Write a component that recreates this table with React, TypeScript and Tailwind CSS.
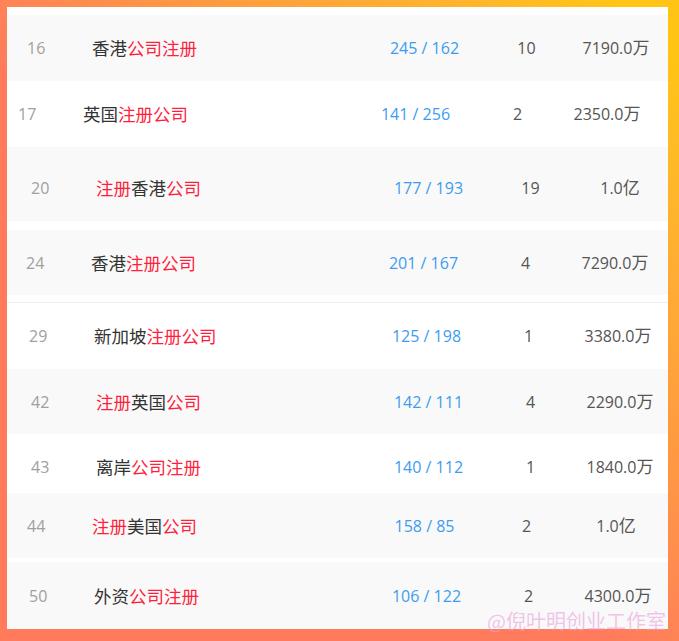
type Part = [string, boolean];

type Row = {
  id: string;
  name: Part[];
  ratio: string;
  count: string;
  amount: string;
  unit: string;
  rowClass: string;
};

const GRAY = "bg-[#f9f9f9]";

const rows: Row[] = [
  {
    id: "16",
    name: [["香港", false], ["公司注册", true]],
    ratio: "245 / 162",
    count: "10",
    amount: "7190.0",
    unit: "万",
    rowClass: `${GRAY} h-[66px] pl-[9px]`,
  },
  {
    id: "17",
    name: [["英国", false], ["注册公司", true]],
    ratio: "141 / 256",
    count: "2",
    amount: "2350.0",
    unit: "万",
    rowClass: "bg-white h-[66px] pl-0",
  },
  {
    id: "20",
    name: [["注册", true], ["香港", false], ["公司", true]],
    ratio: "177 / 193",
    count: "19",
    amount: "1.0",
    unit: "亿",
    rowClass: `${GRAY} h-[74px] pl-[13px] pt-[8px]`,
  },
  {
    id: "24",
    name: [["香港", false], ["注册公司", true]],
    ratio: "201 / 167",
    count: "4",
    amount: "7290.0",
    unit: "万",
    rowClass: `${GRAY} h-[65px] pl-[8px]`,
  },
  {
    id: "29",
    name: [["新加坡", false], ["注册公司", true]],
    ratio: "125 / 198",
    count: "1",
    amount: "3380.0",
    unit: "万",
    rowClass: "bg-white h-[66px] pl-[11px]",
  },
  {
    id: "42",
    name: [["注册", true], ["英国", false], ["公司", true]],
    ratio: "142 / 111",
    count: "4",
    amount: "2290.0",
    unit: "万",
    rowClass: `${GRAY} h-[65px] pl-[13px]`,
  },
  {
    id: "43",
    name: [["离岸", false], ["公司注册", true]],
    ratio: "140 / 112",
    count: "1",
    amount: "1840.0",
    unit: "万",
    rowClass: "bg-white h-[59px] pl-[13px] pt-[7px]",
  },
  {
    id: "44",
    name: [["注册", true], ["美国", false], ["公司", true]],
    ratio: "158 / 85",
    count: "2",
    amount: "1.0",
    unit: "亿",
    rowClass: `${GRAY} h-[65px] pl-[9px]`,
  },
  {
    id: "50",
    name: [["外资", false], ["公司注册", true]],
    ratio: "106 / 122",
    count: "2",
    amount: "4300.0",
    unit: "万",
    rowClass: `${GRAY} h-[67px] pl-[11px]`,
  },
];

// gaps between pasted rows
const gapAfter: Record<string, string> = {
  "20": "h-[9px]",
  "24": "h-[7px]",
  "44": "h-[4px]",
};

const num = "font-['Open_Sans','Noto_Sans_CJK_SC',sans-serif] text-[16px] leading-[24px]";

const RankRow = ({ row }: { row: Row }) => (
  <div
    className={`grid shrink-0 grid-cols-[76px_278px_109px_95px_84px] items-center ${row.rowClass}`}
  >
    <div className={`pl-[11px] text-[#a0a0a0] ${num}`}>{row.id}</div>
    <div className="font-['Noto_Sans_CJK_SC',sans-serif] text-[17.5px] leading-[24px] whitespace-nowrap">
      {row.name.map(([text, red], i) => (
        <span key={i} className={red ? "text-[#ff1e3c]" : "text-[#333333]"}>
          {text}
        </span>
      ))}
    </div>
    <div className={`text-center text-[#3d9cf0] whitespace-nowrap ${num}`}>{row.ratio}</div>
    <div className={`text-center text-[#555555] ${num}`}>{row.count}</div>
    <div className={`text-center text-[#555555] whitespace-nowrap ${num}`}>
      {row.amount}
      <span className="text-[17px]">{row.unit}</span>
    </div>
  </div>
);

export default function App() {
  return (
    <div className="relative h-[641px] w-[679px] overflow-hidden bg-linear-to-tr from-[#ff7b5c] from-45% via-[#ff9a40] via-65% to-[#ffc414] to-95% pt-[7px] pr-[11px] pb-[12px] pl-[7px]">
      {/* Table panel */}
      <div className="flex h-full w-full flex-col overflow-hidden bg-white">
        <div className="h-[8px] shrink-0" />
        {rows.map((row) => (
          <div key={row.id} className="contents">
            <RankRow row={row} />
            {gapAfter[row.id] && <div className={`shrink-0 ${gapAfter[row.id]}`} />}
            {row.id === "24" && <div className="h-px shrink-0 bg-[#efefef]" />}
          </div>
        ))}
      </div>

      {/* Watermark */}
      <div className="pointer-events-none absolute left-[487px] top-[607px] whitespace-nowrap font-['Noto_Sans_CJK_SC',sans-serif] text-[20px] leading-[28px] text-[#e9a0dc]/60">
        @倪叶明创业工作室
      </div>
    </div>
  );
}
